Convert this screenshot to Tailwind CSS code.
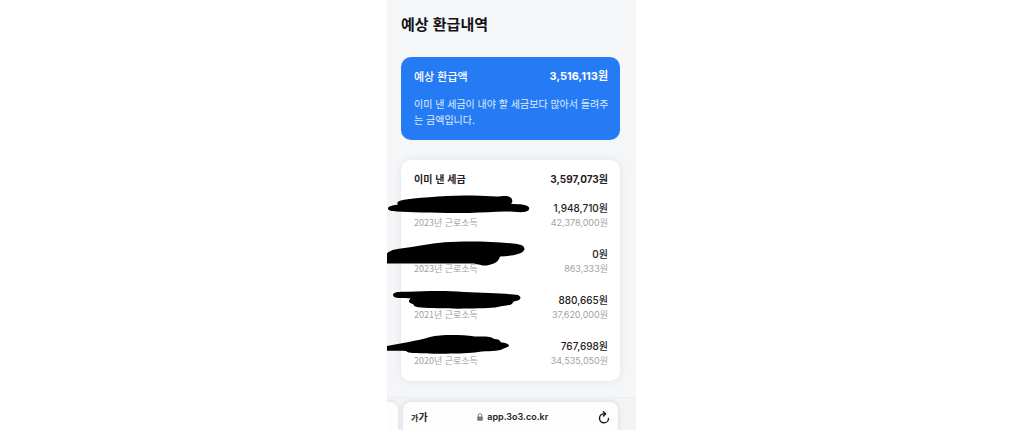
<!DOCTYPE html>
<html lang="ko">
  <head>
    <meta charset="UTF-8" />
    <meta name="viewport" content="width=device-width, initial-scale=1.0" />
    <title>예상 환급내역</title>
    <script src="https://cdn.jsdelivr.net/npm/@tailwindcss/browser@4"></script>
  </head>
  <body class="bg-white flex justify-center pr-0.5 font-['Inter','Noto_Sans_CJK_KR',sans-serif] text-[#1f2124]">
    <div class="relative w-full max-w-[249px] bg-[#f4f6f8] overflow-hidden">
      <main class="pl-3.5 pr-4 pb-4">
        <h1 class="pt-3 text-[15px] leading-6 font-bold text-[#111214] font-['Noto_Sans_CJK_KR',sans-serif]">예상 환급내역</h1>

        <section class="mt-[21px] rounded-[10px] bg-[#247bf4] pl-[13px] pr-3 pt-2.5 pb-3 text-white">
          <div class="flex justify-between text-[11px] leading-[18px]">
            <h2 class="font-medium font-['Noto_Sans_CJK_KR',sans-serif]">예상 환급액</h2>
            <p class="font-bold">3,516,113원</p>
          </div>
          <p class="mt-[11px] -mr-1.5 text-[10px] leading-4 break-all text-white/85 font-['Noto_Sans_CJK_KR',sans-serif]">이미 낸 세금이 내야 할 세금보다 많아서 돌려주는 금액입니다.</p>
        </section>

        <section class="mt-5 rounded-[10px] bg-white pl-[13px] pr-3 pt-2.5 pb-[13px] shadow-[0_0_8px_rgba(30,50,80,0.08)]">
          <div class="flex justify-between text-[10px] leading-[18px] font-bold">
            <h2 class="font-['Noto_Sans_CJK_KR',sans-serif]">이미 낸 세금</h2>
            <p>3,597,073원</p>
          </div>
          <ul class="mt-3 flex flex-col gap-4 text-right">
            <li>
              <p class="text-[10px] leading-4 font-medium">1,948,710원</p>
              <div class="flex justify-between text-[9px] leading-[14px] text-[#a0a2a7]">
                <span class="font-['Noto_Sans_CJK_KR',sans-serif]">2023년 근로소득</span>
                <span>42,378,000원</span>
              </div>
            </li>
            <li>
              <p class="text-[10px] leading-4 font-medium">0원</p>
              <div class="flex justify-between text-[9px] leading-[14px] text-[#a0a2a7]">
                <span class="font-['Noto_Sans_CJK_KR',sans-serif]">2023년 근로소득</span>
                <span>863,333원</span>
              </div>
            </li>
            <li>
              <p class="text-[10px] leading-4 font-medium">880,665원</p>
              <div class="flex justify-between text-[9px] leading-[14px] text-[#a0a2a7]">
                <span class="font-['Noto_Sans_CJK_KR',sans-serif]">2021년 근로소득</span>
                <span>37,620,000원</span>
              </div>
            </li>
            <li>
              <p class="text-[10px] leading-4 font-medium">767,698원</p>
              <div class="flex justify-between text-[9px] leading-[14px] text-[#a0a2a7]">
                <span class="font-['Noto_Sans_CJK_KR',sans-serif]">2020년 근로소득</span>
                <span>34,535,050원</span>
              </div>
            </li>
          </ul>
        </section>
      </main>

      <!-- browser bar -->
      <footer class="flex gap-[5px] border-t border-[#eceef1] bg-[#f1f3f5] pt-1 pr-[18px]">
        <div class="w-[11px] h-7 rounded-tr-lg bg-[#fdfdfd] shadow-[0_0_4px_rgba(30,50,80,0.14)]"></div>
        <div class="flex-1 h-7 flex items-center justify-between rounded-t-lg bg-[#fdfdfd] px-2 pt-0.5 shadow-[0_0_4px_rgba(30,50,80,0.14)]">
          <button type="button" class="flex items-baseline font-bold text-[#222326] leading-4" aria-label="글자 크기">
            <span class="text-[8px]">가</span><span class="text-[10px]">가</span>
          </button>
          <a href="#" class="flex items-center gap-1 text-[9px] leading-4 font-semibold">
            <svg class="w-[6px] h-2" viewBox="0 0 6 8" fill="none">
              <path d="M1.3 4V2.3a1.7 1.7 0 0 1 3.4 0V4" stroke="#77797d" stroke-width="0.9" />
              <rect x="0.2" y="3.4" width="5.6" height="4.4" rx="0.8" fill="#77797d" />
            </svg>
            app.3o3.co.kr
          </a>
          <button type="button" aria-label="새로고침">
            <svg class="w-3 h-[13px]" viewBox="0 0 12 13" fill="none" stroke="#18191b" stroke-width="1.4" stroke-linecap="round" stroke-linejoin="round">
              <path d="M7 2.8H6a4.5 4.5 0 1 0 4.5 4.6" />
              <path d="M5.4 0.8l2.2 2.1-2.2 2.2" />
            </svg>
          </button>
        </div>
      </footer>

      <!-- marker strokes over the company names -->
      <svg class="absolute top-0 left-0 w-[249px] h-[430px] pointer-events-none" viewBox="0 0 249 430" fill="#000">
        <path d="M1 208.500C1 206.500 4 205.500 11 204.500C9 202 12 200.500 19 199.500C38 197 63 195.500 86 195.500C98 195.500 106 197 114 196.300C121 195.500 125 197 125 200C126 202 124.500 203.500 124 204C132 204 142 204.500 142.300 208.300C142 213 134 212.300 126 211.800C112 211 98 212.800 82 213C53 213.300 24 212.500 10 211.600C4 211 1 210.500 1 208.500Z" />
        <path d="M0 263.500V253.500C3 250 8 249.500 14 248.500C28 247 42 243.500 58 242.300C79 241 107 241.600 126 243.500C134 244 137.500 246 137.500 249C137 254 125 256 113 256.500C112 261 108 264 100 265.500C96 266 92 264.500 87 263.500Z" />
        <path d="M6 295C6 292 11 291.500 22 291.800C38 291 58 290.300 77 292C98 293 120 293.500 131 295C135 297 134 300 129 301C125 301.300 127 303 124 304.500C119 306 113 306 108 307.500C90 309 53 309 34 307.500C27 307 27 305.500 26 304C21 303 21 300 24 298.500C16 298 6 299 6 295Z" />
        <path d="M0 350.800V346C14 343 30 341 43 337C54 334.500 72 334.500 88 336.500C98 336.500 104 336 107 339C111 339 113 340 114 342.500C118 342.500 122 344 122 345.500C121 348 117 347.500 115 349.500C107 352 97 350.500 88 352.500C73 354 42 354 27 353C22 353 20 352 19 351C13 350.500 7 351 0 350.800Z" />
      </svg>
    </div>
  </body>
</html>
